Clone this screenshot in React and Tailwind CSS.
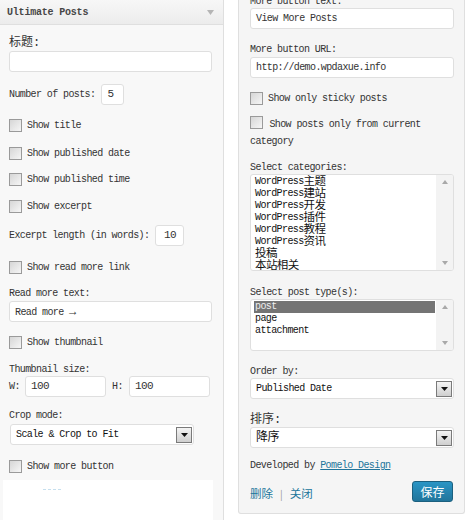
import React from 'react'

const mono = { fontFamily: '"Liberation Mono", "Noto Sans CJK SC", monospace' }

function Checkbox() {
  return (
    <span className="inline-block w-[13px] h-[13px] shrink-0 border border-[#9a9a9a] bg-gradient-to-br from-[#d6d6d6] to-[#f6f6f6] align-[-2px]" />
  )
}

function CheckRow({ label, className = '' }) {
  return (
    <div className={`flex items-center gap-[5px] h-[16px] ${className}`}>
      <Checkbox />
      <span>{label}</span>
    </div>
  )
}

function Label({ children, className = '' }) {
  return <div className={`h-[12px] leading-[12px] ${className}`}>{children}</div>
}

function Input({ value = '', className = 'w-full' }) {
  return (
    <div className={`h-[21px] bg-white border border-[#dfdfdf] rounded-[3px] px-[5px] flex items-center text-[#333] ${className}`}>
      {value}
    </div>
  )
}

function Arrow() {
  return (
    <span className="w-[16px] h-[16px] border border-[#7a7a7a] bg-gradient-to-b from-[#f4f4f4] to-[#cfcfcf] flex items-center justify-center">
      <svg width="7" height="4" viewBox="0 0 7 4"><path d="M0 0h7L3.5 4z" fill="#111" /></svg>
    </span>
  )
}

function Select({ value, className = '', cjk = false }) {
  return (
    <div className={`h-[21px] bg-white border border-[#dfdfdf] rounded-[3px] pl-[5px] pr-[1px] flex items-center justify-between ${className}`}>
      <span className={cjk ? 'text-[12px] text-[#111]' : 'text-[#111]'}>{value}</span>
      <Arrow />
    </div>
  )
}

function ListBox({ children, height }) {
  return (
    <div className={`flex bg-white border border-[#dfdfdf] rounded-[3px] overflow-hidden ${height}`}>
      <div className="flex-1 pl-[3px] pt-[1px] pr-[1px] text-[#111]">{children}</div>
      <div className="w-[17px] bg-[#f3f3f3] flex flex-col justify-between items-center py-[5px]">
        <svg width="6" height="4" viewBox="0 0 6 4"><path d="M0 4h6L3 0z" fill="#a8a8a8" /></svg>
        <svg width="6" height="4" viewBox="0 0 6 4"><path d="M0 0h6L3 4z" fill="#a8a8a8" /></svg>
      </div>
    </div>
  )
}

function Item({ latin, cjk, active }) {
  return (
    <div className={`h-[12px] leading-[12px] flex items-center pl-[1px] ${active ? 'bg-[#747474] text-[#eee]' : ''}`}>
      {latin && <span>{latin}</span>}
      {cjk && <span className="text-[11.5px] leading-[12px]">{cjk}</span>}
    </div>
  )
}

const categories = [
  ['WordPress', '主题'],
  ['WordPress', '建站'],
  ['WordPress', '开发'],
  ['WordPress', '插件'],
  ['WordPress', '教程'],
  ['WordPress', '资讯'],
  ['', '投稿'],
  ['', '本站相关'],
]

export default function App() {
  return (
    <div className="w-[469px] h-[520px] overflow-hidden bg-white flex text-[10px] tracking-[-0.6px] text-[#333]" style={mono}>
      {/* left widget */}
      <div className="w-[224px] h-full bg-[#f8f8f8] border-r border-[#dfdfdf] flex flex-col">
        <div className="h-[25px] shrink-0 bg-gradient-to-b from-[#f7f7f7] to-[#ececec] border-b border-[#dfdfdf] flex items-center justify-between pl-[7px] pr-[9px]">
          <span className="font-bold text-[#464646] tracking-[-0.2px]">Ultimate Posts</span>
          <svg width="7" height="5" viewBox="0 0 7 5"><path d="M0 0h7L3.5 5z" fill="#b5b5b5" /></svg>
        </div>
        <div className="pl-[9px] pr-[11px] flex flex-col">
          <div className="mt-[11px] h-[14px] leading-[14px] text-[12px] tracking-normal text-[#333]">标题:</div>
          <Input className="w-full mt-[1px]" />
          <div className="mt-[12px] flex items-center gap-[6px] h-[21px]">
            <span>Number of posts:</span>
            <Input value="5" className="w-[23px] text-[11px]" />
          </div>
          <CheckRow label="Show title" className="mt-[12px]" />
          <CheckRow label="Show published date" className="mt-[12px]" />
          <CheckRow label="Show published time" className="mt-[10px]" />
          <CheckRow label="Show excerpt" className="mt-[11px]" />
          <div className="mt-[11px] flex items-center gap-[6px] h-[21px]">
            <span>Excerpt length (in words):</span>
            <Input value="10" className="w-[29px] justify-center text-[11px]" />
          </div>
          <CheckRow label="Show read more link" className="mt-[13px]" />
          <Label className="mt-[13px]">Read more text:</Label>
          <Input value={<span>Read more <span className="text-[12px]">→</span></span>} className="w-full mt-[1px]" />
          <CheckRow label="Show thumbnail" className="mt-[12px]" />
          <Label className="mt-[14px]">Thumbnail size:</Label>
          <div className="flex items-center h-[21px]">
            <span className="w-[16px]">W:</span>
            <Input value="100" className="w-[81px] text-[11px]" />
            <span className="ml-[6px] w-[17px]">H:</span>
            <Input value="100" className="w-[81px] text-[11px]" />
          </div>
          <Label className="mt-[13px]">Crop mode:</Label>
          <Select value="Scale & Crop to Fit" className="mt-[2px] ml-[1px] w-[184px]" />
          <CheckRow label="Show more button" className="mt-[13px]" />
        </div>
        <div className="mt-[6px] ml-[3px] w-[210px] flex-1 bg-white pt-[9px] pl-[40px]">
          <div className="w-[18px] border-t border-dashed border-[#c6dfee]" />
        </div>
      </div>

      {/* right widget */}
      <div className="ml-[14px] w-[227px] h-[515px] -mt-[1px] bg-[#f5f5f5] border-x border-b border-[#dfdfdf] rounded-b-[3px] pl-[11px] pr-[10px] flex flex-col">
        <Label className="-mt-[3px]">More button text:</Label>
        <Input value="View More Posts" className="w-full" />
        <Label className="mt-[15px]">More button URL:</Label>
        <Input value="http://demo.wpdaxue.info" className="w-full mt-[1px]" />
        <CheckRow label="Show only sticky posts" className="mt-[12px]" />
        <div className="mt-[10px] leading-[17px]">
          <Checkbox /> <span className="ml-[1px]">Show posts only from current category</span>
        </div>
        <Label className="mt-[12px]">Select categories:</Label>
        <div className="mt-[0px]">
          <ListBox height="h-[97px]">
            {categories.map(([l, c], i) => (
              <Item key={i} latin={l} cjk={c} />
            ))}
          </ListBox>
        </div>
        <Label className="mt-[16px]">Select post type(s):</Label>
        <div className="mt-[0px]">
          <ListBox height="h-[52px]">
            <Item latin="post" active />
            <Item latin="page" />
            <Item latin="attachment" />
          </ListBox>
        </div>
        <Label className="mt-[15px]">Order by:</Label>
        <Select value="Published Date" className="w-full" />
        <div className="mt-[15px] h-[12px] leading-[12px] text-[12px] tracking-normal">排序:</div>
        <Select value="降序" cjk className="w-full mt-[1px]" />
        <div className="mt-[12px] h-[12px] leading-[12px]">
          Developed by <span className="text-[#21759b] underline">Pomelo Design</span>
        </div>
        <div className="mt-[9px] flex items-center justify-between pr-[1px]">
          <div className="flex items-center text-[11.5px] tracking-normal text-[#21759b] mt-[4px]" style={{ fontFamily: '"Noto Sans CJK SC", sans-serif' }}>
            <span>删除</span>
            <span className="mx-[7px] text-[#999] text-[10px]">|</span>
            <span>关闭</span>
          </div>
          <button className="w-[41px] h-[21px] rounded-[3px] border border-[#1b607f] bg-gradient-to-b from-[#2a95c5] to-[#21759b] text-white text-[12px] tracking-normal flex items-center justify-center" style={{ fontFamily: '"Noto Sans CJK SC", sans-serif' }}>
            保存
          </button>
        </div>
      </div>
    </div>
  )
}
